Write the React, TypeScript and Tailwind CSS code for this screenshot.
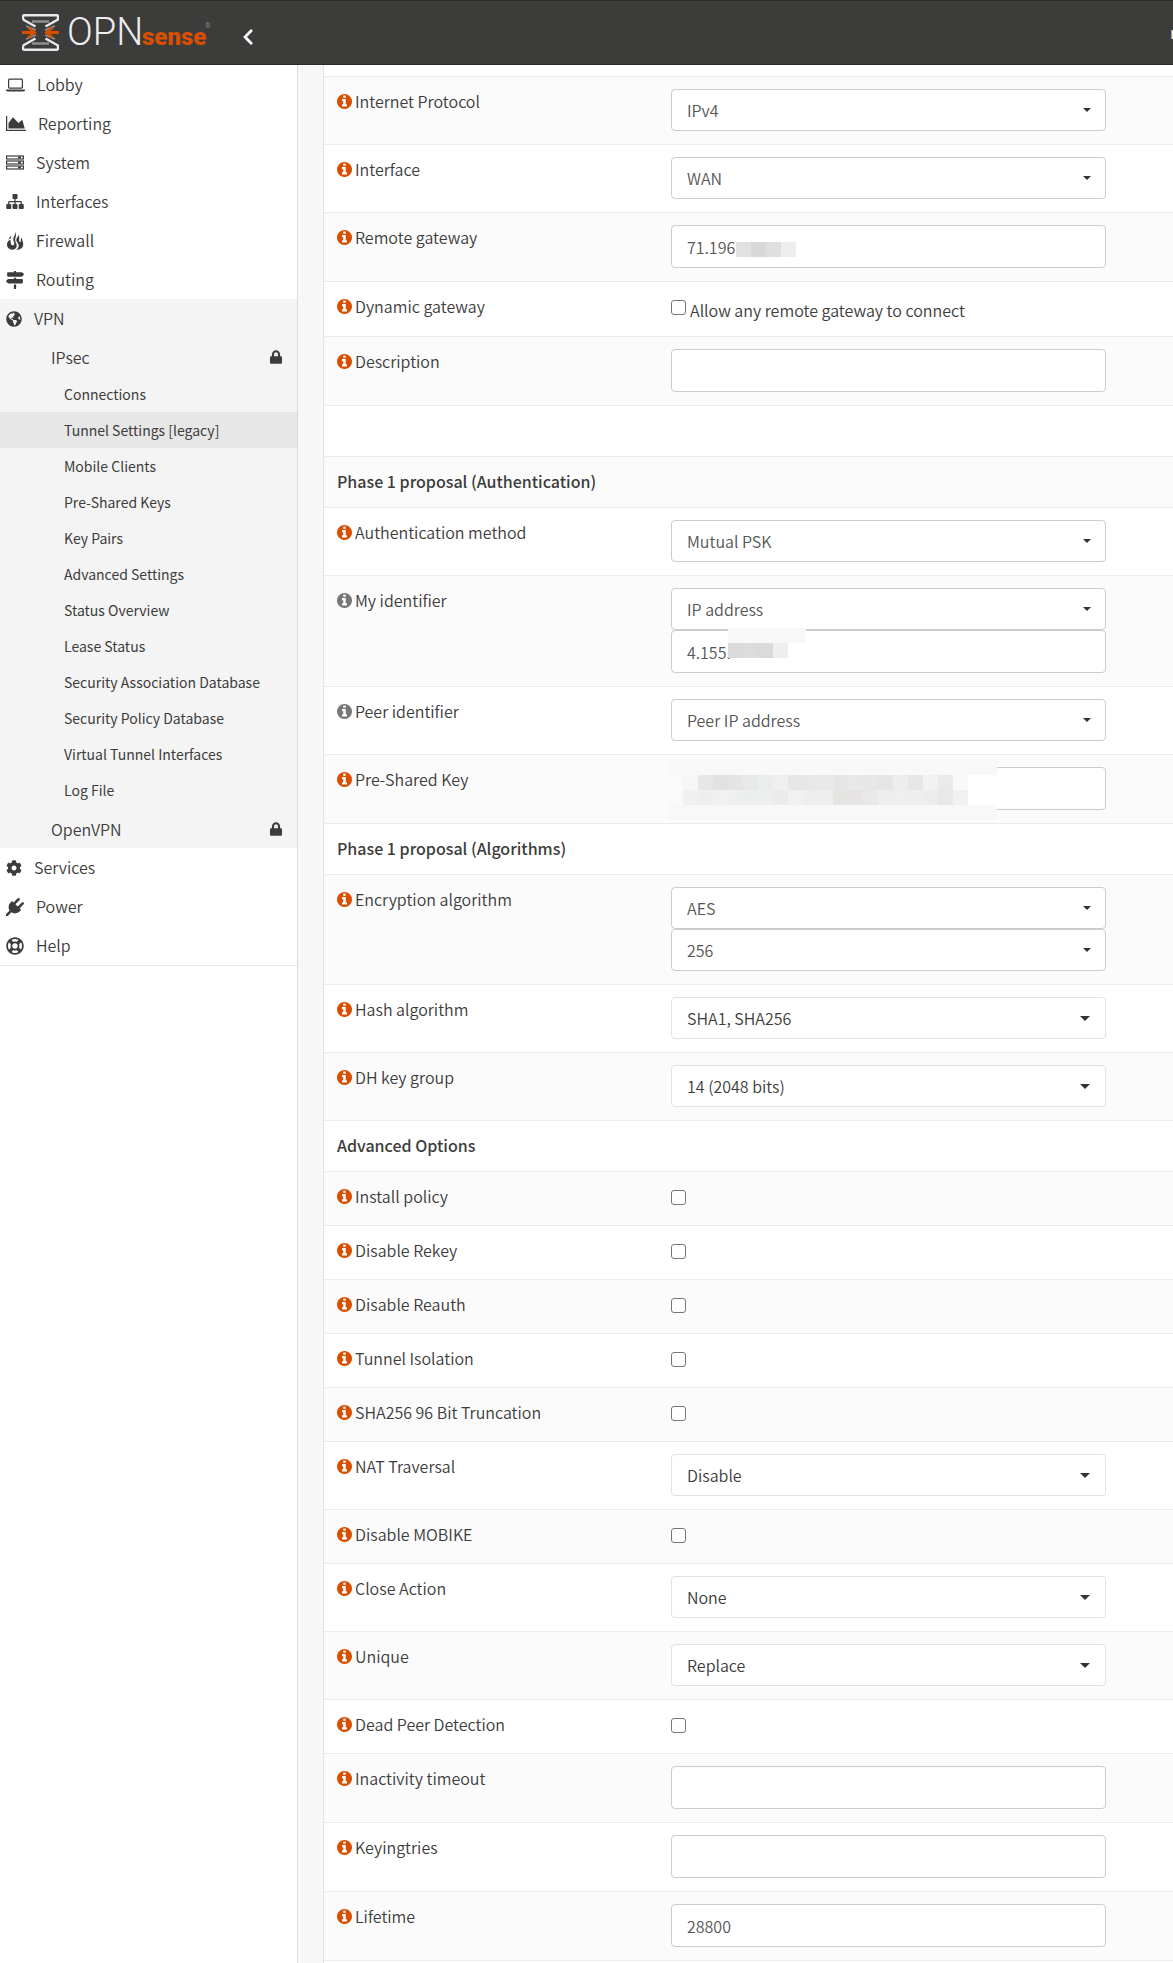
import React from "react";
import {
  FaChevronLeft,
  FaCog,
  FaGlobeAmericas,
  FaLock,
  FaMapSigns,
  FaRegLifeRing,
} from "react-icons/fa";

/* ---------- icons ---------- */

function LaptopIcon() {
  return (
    <svg viewBox="0 0 19 14" className="h-[14px] w-[19px]" fill="currentColor" aria-hidden="true">
      <path
        fillRule="evenodd"
        d="M3.600 0.500h11.800c.9 0 1.600.7 1.600 1.600v7c0 .9-.7 1.600-1.600 1.600H3.600C2.700 10.700 2 10 2 9.100v-7C2 1.200 2.700.5 3.600.5zm0 1.200c-.2 0-.4.2-.4.4v7c0 .2.2.4.4.4h11.800c.2 0 .4-.2.4-.4v-7c0-.2-.2-.4-.4-.4z"
      />
      <path d="M0 11.500h19v.8c0 .7-.8 1.200-1.800 1.200H1.800C.8 13.500 0 13 0 12.300z" />
    </svg>
  );
}

function AreaChartIcon() {
  return (
    <svg viewBox="0 128 2048 1536" className="h-[15px] w-[20px]" fill="currentColor" aria-hidden="true">
      <path d="M2048 1536v128H0V128h128v1408h1920zM1664 512l256 896H256V832l448-576 576 576z" />
    </svg>
  );
}

function ServerIcon() {
  return (
    <svg viewBox="0 0 18 15" className="h-[15px] w-[18px]" aria-hidden="true">
      {[0, 5, 10].map((y) => (
        <g key={y} transform={`translate(0 ${y})`}>
          <rect x="0.600" y="1" width="16.800" height="3" fill="none" stroke="currentColor" strokeWidth="1.200" />
          <rect x="12" y="1.500" width="3" height="2" fill="currentColor" />
        </g>
      ))}
    </svg>
  );
}

function SitemapIcon() {
  return (
    <svg viewBox="0 128 1792 1536" className="h-[15px] w-[18px]" fill="currentColor" aria-hidden="true">
      <path d="M1792 1248v320q0 40-28 68t-68 28h-320q-40 0-68-28t-28-68v-320q0-40 28-68t68-28h96v-192H960v192h96q40 0 68 28t28 68v320q0 40-28 68t-68 28H736q-40 0-68-28t-28-68v-320q0-40 28-68t68-28h96V960H320v192h96q40 0 68 28t28 68v320q0 40-28 68t-68 28H96q-40 0-68-28t-28-68v-320q0-40 28-68t68-28h96V960q0-52 38-90t90-38h512V640h-96q-40 0-68-28t-28-68V224q0-40 28-68t68-28h320q40 0 68 28t28 68v320q0 40-28 68t-68 28h-96v192h512q52 0 90 38t38 90v192h96q40 0 68 28t28 68z" />
    </svg>
  );
}

function FireIcon() {
  return (
    <svg viewBox="0 0 18 18" className="h-[18px] w-[18px]" fill="currentColor" aria-hidden="true">
      <path d="M9.200 0C9.800 3 7.300 4.300 7.300 7.400c0 1.900 1.200 2.700 1 4.300-.1 1.300-1.300 1.900-2.300 1.500C4.300 12.600 5 10.200 4.400 7.600 2 8.900.7 11 1 13.500c.3 2.300 2.200 3.900 4.900 4.200 2.500.2 4.400-1 4.800-3.100.5-2.700-1.500-3.800-1.500-6.500C9.200 5.400 11 3 9.200 0z" />
      <path d="M12 2.600c.9 2-1.700 3.300-1.700 5.600 0 1.900 2.400 3 2.400 5.300 0 1.900-1 3.300-2.400 4.400 3.800-.1 6.600-1.900 6.900-4.900.2-2.500-1.100-4.500-1.300-7.300-1.100.9-1.300 2.300-1 3.400.2 1-1.100 1.500-1.500.6-.8-2 .8-4.500-1.400-7.100z" />
      <path d="M4.800 3.500c.2 1.300-1.600 2.200-2.400 3.900 1-.2 2.300-.8 2.700-1.900.3-.8.200-1.500-.3-2z" />
    </svg>
  );
}

function PlugIcon() {
  return (
    <svg viewBox="0 0 1792 1792" className="h-[18px] w-[18px]" fill="currentColor" aria-hidden="true">
      <path d="M1755 453q37 38 37 90.500t-37 90.500l-401 400 150 150-160 160q-163 163-389.500 186.500T543 1430l-362 362H0v-181l362-362q-124-185-100.500-411.500T448 448l160-160 150 150 400-401q38-37 91-37t90 37 37 90.500-37 90.500L939 619l234 234 401-400q38-37 91-37t90 37z" />
    </svg>
  );
}

function InfoIcon({ muted }: { muted?: boolean }) {
  return (
    <svg
      viewBox="128 128 1536 1536"
      className={muted ? "size-[15px] shrink-0 text-[#777777]" : "size-[15px] shrink-0 text-[#d94f00]"}
      fill="currentColor"
      aria-hidden="true"
    >
      <path d="M1152 1376v-160q0-14-9-23t-23-9h-96V672q0-14-9-23t-23-9H672q-14 0-23 9t-9 23v160q0 14 9 23t23 9h96v320h-96q-14 0-23 9t-9 23v160q0 14 9 23t23 9h448q14 0 23-9t9-23zm-128-896V320q0-14-9-23t-23-9H800q-14 0-23 9t-9 23v160q0 14 9 23t23 9h192q14 0 23-9t9-23zm640 416q0 209-103 385.500T1281.500 1561 896 1664t-385.500-103T231 1281.500 128 896t103-385.500T510.500 231 896 128t385.500 103T1561 510.500 1664 896z" />
    </svg>
  );
}

function LogoMark() {
  return (
    <svg viewBox="0 0 37 37" className="size-[37px] shrink-0" fill="none" aria-hidden="true">
      <path d="M10 7.500h17M10 29.500h17" stroke="#8f8f8f" strokeWidth="2.400" />
      <path d="M4 12l10 4M33 12l-10 4M4 25l10-4M33 25l-10-4" stroke="#8f8f8f" strokeWidth="1.800" />
      <path d="M1 5.500V2.500q0-1.200 1.200-1.200h32.600q1.200 0 1.200 1.200v3L23.500 12.500M1 5.500l12.500 7" stroke="#e9e9e9" strokeWidth="2.500" />
      <path d="M1 31.500v3q0 1.200 1.200 1.200h32.600q1.200 0 1.200-1.200v-3L23.500 24.500M1 31.500l12.500-7" stroke="#e9e9e9" strokeWidth="2.500" />
      <path d="M0 18.500h12M6.500 13.500l6 5-6 5M37 18.500H25M30.500 13.500l-6 5 6 5" stroke="#d94f00" strokeWidth="2.800" />
    </svg>
  );
}

/* ---------- form controls ---------- */

type Field =
  | { type: "select"; value: string; light?: boolean }
  | { type: "text"; value: string; cover?: React.ReactNode }
  | { type: "check"; text?: string };

function Control({ field, id, label }: { field: Field; id: string; label: string }) {
  if (field.type === "select") {
    return (
      <div className="relative w-[435px] max-w-full">
        <select
          id={id}
          aria-label={label}
          className={
            field.light
              ? "block h-[42px] w-full appearance-none rounded-[4px] border border-[#e2e2e2] bg-white pr-10 pl-[15px] text-[#3c3c3b]"
              : "block h-[42px] w-full appearance-none rounded-[4px] border border-[#cccccc] bg-white pr-10 pl-[15px] text-[#555555]"
          }
        >
          <option>{field.value}</option>
        </select>
        <span
          className={
            field.light
              ? "pointer-events-none absolute top-[19px] right-4 border-x-[5px] border-t-[5px] border-x-transparent border-t-[#333333]"
              : "pointer-events-none absolute top-[19px] right-[15px] border-x-4 border-t-4 border-x-transparent border-t-[#333333]"
          }
        />
      </div>
    );
  }
  if (field.type === "text") {
    return (
      <div className="relative w-[435px] max-w-full">
        <input
          id={id}
          type="text"
          aria-label={label}
          defaultValue={field.value}
          className="block h-[43px] w-full rounded-[4px] border border-[#cccccc] bg-white px-[15px] text-[#555555]"
        />
        {field.cover}
      </div>
    );
  }
  return (
    <div className="flex min-h-7 items-start gap-1">
      <input
        id={id}
        type="checkbox"
        aria-label={field.text ? undefined : label}
        className="mt-[6px] size-[15px] shrink-0 appearance-none rounded-[3px] border border-[#767676] bg-white checked:bg-[#d94f00]"
      />
      {field.text && (
        <label htmlFor={id} className="pt-1 leading-[25px]">
          {field.text}
        </label>
      )}
    </div>
  );
}

/* ---------- pixelated covers ---------- */

function Mosaic({ cells }: { cells: string[] }) {
  return (
    <div className="flex">
      {cells.map((c, i) => (
        <span key={i} className={`size-[15px] ${c}`} />
      ))}
    </div>
  );
}

const gatewayCover = (
  <div className="absolute top-[17px] left-[65px]" aria-hidden="true">
    <Mosaic cells={["bg-[#e2e1df]", "bg-[#d6d9d7]", "bg-[#e0dedf]", "bg-[#edeef0]"]} />
  </div>
);

const identifierCover = (
  <div className="absolute top-[-2px] left-[57px] w-[78px]" aria-hidden="true">
    <div className="h-[15px] bg-[#f8f8f8]" />
    <Mosaic cells={["bg-[#dbdbdc]", "bg-[#dbdcdd]", "bg-[#dadadb]", "bg-[#edeef0]"]} />
  </div>
);

const keyCover = (
  <div className="absolute top-[-7px] left-[-3px] w-[329px] bg-white" aria-hidden="true">
    <div className="h-[15px] bg-[#f8f8f8]" />
    <Mosaic
      cells={[
        "bg-[#fafafa]", "bg-[#f6f6f6]", "bg-[#e7e7e7]", "bg-[#e2e2e2]", "bg-[#e4e4e4]",
        "bg-[#e7eae9]", "bg-[#eaedec]", "bg-[#efefef]", "bg-[#e7e7e7]", "bg-[#e8e8e8]",
        "bg-[#e9e9e9]", "bg-[#e5e5e5]", "bg-[#e8e8e8]", "bg-[#e7e7e7]", "bg-[#e3e6e5]",
        "bg-[#ededee]", "bg-[#e7e7e7]", "bg-[#f0f3f2]", "bg-[#eaeaea]", "bg-[#f7faf9]",
      ]}
    />
    <Mosaic
      cells={[
        "bg-[#fafafa]", "bg-[#f0f0f0]", "bg-[#eeeeee]", "bg-[#f1f1f1]", "bg-[#efefef]",
        "bg-[#eaeeed]", "bg-[#ecefee]", "bg-[#ebebeb]", "bg-[#f1f1f1]", "bg-[#eeeeee]",
        "bg-[#eeeeee]", "bg-[#e5e4e3]", "bg-[#e5e4e3]", "bg-[#e9e9ea]", "bg-[#ecefee]",
        "bg-[#f1efee]", "bg-[#eeeeee]", "bg-[#ececec]", "bg-[#e8e8e8]", "bg-[#f1f1f1]",
      ]}
    />
    <div className="h-[15px] bg-[#f8f8f8]" />
  </div>
);

/* ---------- page data ---------- */

type Row = { heading: string } | { label: string; muted?: boolean; fields: Field[] };

const check: Field[] = [{ type: "check" }];

const rows: Row[] = [
  { label: "Internet Protocol", fields: [{ type: "select", value: "IPv4" }] },
  { label: "Interface", fields: [{ type: "select", value: "WAN" }] },
  { label: "Remote gateway", fields: [{ type: "text", value: "71.196", cover: gatewayCover }] },
  { label: "Dynamic gateway", fields: [{ type: "check", text: "Allow any remote gateway to connect" }] },
  { label: "Description", fields: [{ type: "text", value: "" }] },
  { heading: "" },
  { heading: "Phase 1 proposal (Authentication)" },
  { label: "Authentication method", fields: [{ type: "select", value: "Mutual PSK" }] },
  {
    label: "My identifier",
    muted: true,
    fields: [
      { type: "select", value: "IP address" },
      { type: "text", value: "4.155.", cover: identifierCover },
    ],
  },
  { label: "Peer identifier", muted: true, fields: [{ type: "select", value: "Peer IP address" }] },
  { label: "Pre-Shared Key", fields: [{ type: "text", value: "", cover: keyCover }] },
  { heading: "Phase 1 proposal (Algorithms)" },
  {
    label: "Encryption algorithm",
    fields: [
      { type: "select", value: "AES" },
      { type: "select", value: "256" },
    ],
  },
  { label: "Hash algorithm", fields: [{ type: "select", value: "SHA1, SHA256", light: true }] },
  { label: "DH key group", fields: [{ type: "select", value: "14 (2048 bits)", light: true }] },
  { heading: "Advanced Options" },
  { label: "Install policy", fields: check },
  { label: "Disable Rekey", fields: check },
  { label: "Disable Reauth", fields: check },
  { label: "Tunnel Isolation", fields: check },
  { label: "SHA256 96 Bit Truncation", fields: check },
  { label: "NAT Traversal", fields: [{ type: "select", value: "Disable", light: true }] },
  { label: "Disable MOBIKE", fields: check },
  { label: "Close Action", fields: [{ type: "select", value: "None", light: true }] },
  { label: "Unique", fields: [{ type: "select", value: "Replace", light: true }] },
  { label: "Dead Peer Detection", fields: check },
  { label: "Inactivity timeout", fields: [{ type: "text", value: "" }] },
  { label: "Keyingtries", fields: [{ type: "text", value: "" }] },
  { label: "Lifetime", fields: [{ type: "text", value: "28800" }] },
];

const ipsecPages = [
  "Connections",
  "Tunnel Settings [legacy]",
  "Mobile Clients",
  "Pre-Shared Keys",
  "Key Pairs",
  "Advanced Settings",
  "Status Overview",
  "Lease Status",
  "Security Association Database",
  "Security Policy Database",
  "Virtual Tunnel Interfaces",
  "Log File",
];

/* ---------- layout ---------- */

function MenuItem({ icon, text }: { icon: React.ReactNode; text: string }) {
  return (
    <a href="#" className="flex h-[39px] items-center gap-3 pl-[6px]">
      {icon}
      <span>{text}</span>
    </a>
  );
}

function SubMenuItem({ text }: { text: string }) {
  return (
    <a href="#" className="flex h-[38px] items-center justify-between pr-[15px] pl-[51px]">
      <span>{text}</span>
      <FaLock className="h-[14px] w-3" />
    </a>
  );
}

function Sidebar() {
  return (
    <nav className="w-[298px] shrink-0 border-r border-[#d9d9d9] bg-white text-[16px]">
      <div className="border-b border-[#e7e7e7]">
        <MenuItem icon={<LaptopIcon />} text="Lobby" />
        <MenuItem icon={<AreaChartIcon />} text="Reporting" />
        <MenuItem icon={<ServerIcon />} text="System" />
        <MenuItem icon={<SitemapIcon />} text="Interfaces" />
        <MenuItem icon={<FireIcon />} text="Firewall" />
        <MenuItem icon={<FaMapSigns className="size-[18px]" />} text="Routing" />
        <div className="bg-[#f4f4f4]">
          <MenuItem icon={<FaGlobeAmericas className="size-4" />} text="VPN" />
          <SubMenuItem text="IPsec" />
          <ul className="pb-[2px] text-[14px] font-normal">
            {ipsecPages.map((p, i) => (
              <li key={p}>
                <a
                  href="#"
                  className={
                    i === 1
                      ? "flex h-9 items-center bg-[#e7e7e7] pl-16"
                      : "flex h-9 items-center pl-16"
                  }
                >
                  {p}
                </a>
              </li>
            ))}
          </ul>
          <SubMenuItem text="OpenVPN" />
        </div>
        <MenuItem icon={<FaCog className="size-4" />} text="Services" />
        <MenuItem icon={<PlugIcon />} text="Power" />
        <MenuItem icon={<FaRegLifeRing className="size-[18px]" />} text="Help" />
      </div>
    </nav>
  );
}

function Header() {
  return (
    <header className="flex h-[65px] items-center justify-between border-y border-[#2b2b2a] bg-[#3c3c3b]">
      <div className="flex items-center">
        <a href="#" aria-label="OPNsense" className="flex items-center gap-2 pl-[22px]">
          <LogoMark />
          <span className="flex items-baseline pt-1 font-[Roboto,sans-serif] leading-[37px]">
            <span className="w-[75px] text-[38px] font-light text-[#ededed]">OPN</span>
            <span className="w-[63px] text-[24px] font-black text-[#d94f00]">sense</span>
            <span className="self-start text-[7px] leading-[24px] text-[#a0a0a0]">®</span>
          </span>
        </a>
        <button type="button" aria-label="Collapse menu" className="mt-2 ml-[30px] text-white">
          <FaChevronLeft className="h-[18px] w-[14px]" />
        </button>
      </div>
      <span className="w-[3px] overflow-hidden text-[16px] text-white">r</span>
    </header>
  );
}

export default function App() {
  return (
    <div className="flex min-h-screen flex-col bg-white font-['Noto_Sans_CJK_SC',sans-serif] text-[16px] leading-[25px] font-[350] text-[#3c3c3b]">
      <Header />
      <div className="flex grow">
        <Sidebar />
        <main className="min-w-0 grow bg-[#f7f7f7] pl-[25px]">
          <div className="h-full border-l border-[#e5e5e5] bg-white pt-[11px]">
            <table className="w-full table-fixed border-collapse border-b border-[#ececec]">
              <colgroup>
                <col className="w-[335px]" />
                <col />
              </colgroup>
              <tbody>
                {rows.map((row, r) =>
                  "heading" in row ? (
                    <tr key={r} className="border-t border-[#ececec] even:bg-white odd:bg-[#fbfbfb]">
                      <th colSpan={2} className="h-[51px] px-[13px] pt-3 pb-[13px] text-left align-top font-medium">
                        {row.heading}
                      </th>
                    </tr>
                  ) : (
                    <tr key={r} className="border-t border-[#ececec] even:bg-white odd:bg-[#fbfbfb]">
                      <td className="pt-3 pb-[13px] pl-[13px] align-top">
                        <div className="flex items-center gap-[3px]">
                          <InfoIcon muted={row.muted} />
                          <label htmlFor={`field-${r}-0`}>{row.label}</label>
                        </div>
                      </td>
                      <td className="pt-3 pr-3 pb-[13px] pl-3 align-top">
                        {row.fields.map((f, i) => (
                          <Control key={i} field={f} id={`field-${r}-${i}`} label={row.label} />
                        ))}
                      </td>
                    </tr>
                  ),
                )}
              </tbody>
            </table>
          </div>
        </main>
      </div>
    </div>
  );
}
